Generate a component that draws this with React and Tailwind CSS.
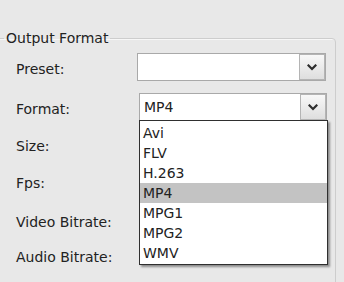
import React from "react";

const formats = ["Avi", "FLV", "H.263", "MP4", "MPG1", "MPG2", "WMV"];

function Chevron() {
  return (
    <svg width="10" height="7" viewBox="0 0 10 7" className="block">
      <path d="M1.5 1.5 L5 5 L8.5 1.5" fill="none" stroke="#2e2e2e" strokeWidth="2.2" strokeLinecap="square" />
    </svg>
  );
}

function Combo({ value, className = "", children }) {
  return (
    <div className={`relative flex h-[28px] border border-[#a9a9a9] bg-white ${className}`}>
      <div className="flex flex-1 items-center pt-[1px] pl-[4px]">{value}</div>
      <div className="flex w-[26px] items-center justify-center border border-[#b4b4b4] bg-gradient-to-b from-[#f8f8f8] to-[#dedede]">
        <Chevron />
      </div>
      {children}
    </div>
  );
}

export default function App() {
  const selected = "MP4";

  return (
    <div className="h-[282px] w-[344px] overflow-hidden bg-[#e8e8e8] font-['DejaVu_Sans',sans-serif] text-[14px] leading-[17px] text-[#222]">
      <fieldset className="mt-[30px] ml-[-4px] h-[300px] w-[340px] rounded-[4px] border border-[#cdcdcd] shadow-[inset_1px_1px_0_#f7f7f7]">
        <legend className="ml-[7px] px-[2px]">Output Format</legend>

        <div className="flex flex-col pt-[6px] pl-[19px]">
          <div className="flex h-[28px] items-center">
            <span className="w-[121px] shrink-0 pt-[5px]">Preset:</span>
            <Combo className="w-[189px]" />
          </div>

          <div className="mt-[12px] flex h-[28px] items-center">
            <span className="w-[123px] shrink-0 pt-[5px]">Format:</span>
            <Combo value={selected} className="w-[188px]">
              <ul className="absolute top-full left-[-1px] z-10 w-[189px] border border-[#2f2f2f] bg-white pt-[2px] pb-[1px] shadow-[2px_2px_2px_rgba(0,0,0,0.4)]">
                {formats.map((f) => (
                  <li
                    key={f}
                    className={`flex h-[20px] items-center pl-[3px] ${f === selected ? "bg-[#c3c3c3]" : ""}`}
                  >
                    {f}
                  </li>
                ))}
              </ul>
            </Combo>
          </div>

          <div className="mt-[11px] flex h-[28px] items-center">Size:</div>
          <div className="mt-[9px] flex h-[28px] items-center">Fps:</div>
          <div className="mt-[11px] flex h-[28px] items-center">Video Bitrate:</div>
          <div className="mt-[7px] flex h-[28px] items-center">Audio Bitrate:</div>
        </div>
      </fieldset>
    </div>
  );
}
